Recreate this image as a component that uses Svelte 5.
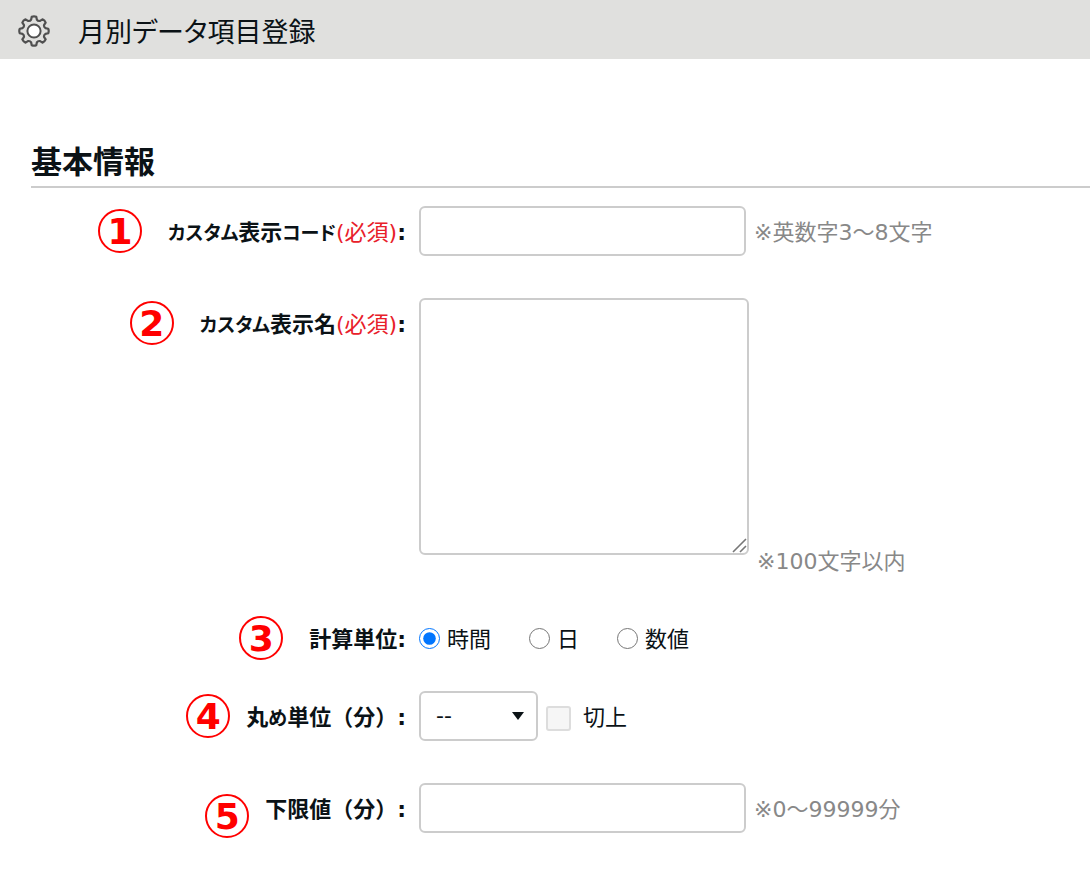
<script>
  let code = $state('');
  let name = $state('');
  let unit = $state('time');
  let rounding = $state('');
  let lower = $state('');

  const units = [
    { value: 'time', label: '時間' },
    { value: 'day', label: '日' },
    { value: 'number', label: '数値' },
  ];

  // Outline of an eight-toothed gear centred on the origin.
  const polar = (r, deg) => {
    const a = (deg * Math.PI) / 180;
    return `${(r * Math.cos(a)).toFixed(2)} ${(r * Math.sin(a)).toFixed(2)}`;
  };
  const gear =
    Array.from({ length: 8 }, (_, i) => {
      const c = i * 45;
      return (
        `${i ? 'L' : 'M'}${polar(11.8, c - 14)}L${polar(14.4, c - 9)}` +
        `Q${polar(15.2, c)} ${polar(14.4, c + 9)}` +
        `L${polar(11.8, c + 14)}Q${polar(10.4, c + 22.5)} ${polar(11.8, c + 31)}`
      );
    }).join('') + 'Z';
</script>

<header class="bar">
  <svg class="gear" viewBox="-16 -16 32 32" aria-hidden="true">
    <path d={gear} fill="none" stroke="#505050" stroke-width="2.2" stroke-linejoin="round" />
    <circle r="6.6" fill="#fff" stroke="#505050" stroke-width="2" />
  </svg>
  <h1>月別データ項目登録</h1>
</header>

<main>
  <h2>基本情報</h2>
  <form>
    <div class="row">
      <div class="caption">
        <span class="badge">1</span>
        <label class="label" for="code"><span class="kana">カスタム</span>表示<span class="kana">コード</span><span class="required">(必須)</span>:</label>
      </div>
      <div class="field">
        <input id="code" class="box" type="text" bind:value={code} />
        <span class="hint">※英数字3～8文字</span>
      </div>
    </div>

    <div class="row tall">
      <div class="caption">
        <span class="badge">2</span>
        <label class="label" for="name"><span class="kana">カスタム</span>表示名<span class="required">(必須)</span>:</label>
      </div>
      <div class="field">
        <textarea id="name" class="box" bind:value={name}></textarea>
        <span class="hint">※100文字以内</span>
      </div>
    </div>

    <div class="row choices" role="radiogroup" aria-labelledby="unit-label">
      <div class="caption">
        <span class="badge">3</span>
        <span id="unit-label" class="label">計算単位:</span>
      </div>
      <div class="field">
        {#each units as u}
          <label class="option">
            <input type="radio" name="unit" value={u.value} bind:group={unit} />
            <span class="text">{u.label}</span>
          </label>
        {/each}
      </div>
    </div>

    <div class="row">
      <div class="caption wide">
        <span class="badge">4</span>
        <label class="label" for="rounding">丸<span class="kana">め</span>単位（分）:</label>
      </div>
      <div class="field">
        <select id="rounding" class="box" bind:value={rounding}>
          <option value="">--</option>
        </select>
        <label class="check">
          <input type="checkbox" disabled />
          <span class="text">切上</span>
        </label>
      </div>
    </div>

    <div class="row">
      <div class="caption wide low">
        <span class="badge">5</span>
        <label class="label" for="lower">下限値（分）:</label>
      </div>
      <div class="field">
        <input id="lower" class="box" type="text" bind:value={lower} />
        <span class="hint">※0～99999分</span>
      </div>
    </div>
  </form>
</main>

<style>
  :global(body) {
    margin: 0;
    background: #fff;
    color: #0b1216;
    font: 22px/30px "DejaVu Sans", "Noto Sans CJK JP", sans-serif;
  }

  .bar {
    display: flex;
    align-items: center;
    gap: 28px;
    height: 59px;
    padding: 3px 18px 0;
    box-sizing: border-box;
    background: #e0e0de;
  }

  .gear {
    flex: none;
    width: 32px;
    height: 32px;
  }

  h1 {
    margin: 0;
    padding-top: 4px;
    font-size: 27px;
    font-weight: 400;
    line-height: 40px;
    font-feature-settings: "palt";
  }

  main {
    padding: 81px 0 40px 31px;
  }

  h2 {
    margin: 0 0 18px;
    padding-bottom: 2px;
    border-bottom: 2px solid #ccc;
    font-size: 31px;
    line-height: 44px;
  }

  .row {
    display: flex;
    min-height: 50px;
    margin-bottom: 42px;
  }

  .caption {
    display: flex;
    flex: none;
    align-items: center;
    justify-content: flex-end;
    gap: 26px;
    width: 375px;
    height: 50px;
    margin-right: 13px;
    font-weight: 700;
    font-feature-settings: "palt";
  }

  .wide {
    gap: 16px;
    font-feature-settings: normal;
  }

  .label,
  .hint,
  .text {
    padding-top: 4px;
  }

  .kana {
    font-size: 19px;
  }

  .badge {
    flex: none;
    width: 40px;
    height: 40px;
    border: 2px solid #f00;
    border-radius: 50%;
    color: #f00;
    font-size: 36px;
    line-height: 42px;
    text-align: center;
  }

  .low .badge {
    margin-top: 16px;
  }

  .required {
    color: #e8202a;
    font-weight: 400;
  }

  .field {
    display: flex;
    flex: 1;
    align-items: center;
    gap: 8px;
    min-width: 0;
  }

  .box {
    box-sizing: border-box;
    height: 50px;
    border: 2px solid #ccc;
    border-radius: 6px;
    background-color: #fff;
    color: inherit;
    font: inherit;
  }

  input.box {
    width: 327px;
    padding: 0 12px;
  }

  textarea {
    width: 330px;
    padding: 12px;
  }

  textarea.box {
    height: 257px;
  }

  textarea::-webkit-resizer {
    background: url("data:image/svg+xml,%3Csvg xmlns='http://www.w3.org/2000/svg' viewBox='0 0 15 15'%3E%3Cpath d='M1 14 14 1M8 14l6-6' stroke='%23777' stroke-width='1.6'/%3E%3C/svg%3E") right bottom / 15px 15px no-repeat;
  }

  .tall .field {
    align-items: flex-end;
  }

  .tall textarea {
    margin-bottom: 18px;
  }

  .tall .hint {
    padding-top: 0;
    line-height: 22px;
  }

  .tall {
    margin-bottom: 40px;
  }

  .hint {
    color: #888;
    white-space: nowrap;
  }

  .choices {
    margin-bottom: 28px;
  }

  .choices .field {
    gap: 38px;
  }

  .option,
  .check {
    display: flex;
    align-items: center;
    gap: 7px;
  }

  input[type="radio"] {
    width: 21px;
    height: 21px;
    margin: 0;
  }

  select {
    width: 119px;
    padding: 0 15px;
    appearance: none;
    background: url("data:image/svg+xml,%3Csvg xmlns='http://www.w3.org/2000/svg' viewBox='0 0 12 8'%3E%3Cpath d='M0 0h12L6 8z' fill='%230b1216'/%3E%3C/svg%3E") right 12px center / 12px 8px no-repeat;
  }

  .check {
    gap: 12px;
  }

  input[type="checkbox"] {
    box-sizing: border-box;
    width: 25px;
    height: 25px;
    margin: 4px 0 0;
    border: 2px solid #ddd;
    border-radius: 3px;
    background: #f6f6f6;
    appearance: none;
  }
</style>
